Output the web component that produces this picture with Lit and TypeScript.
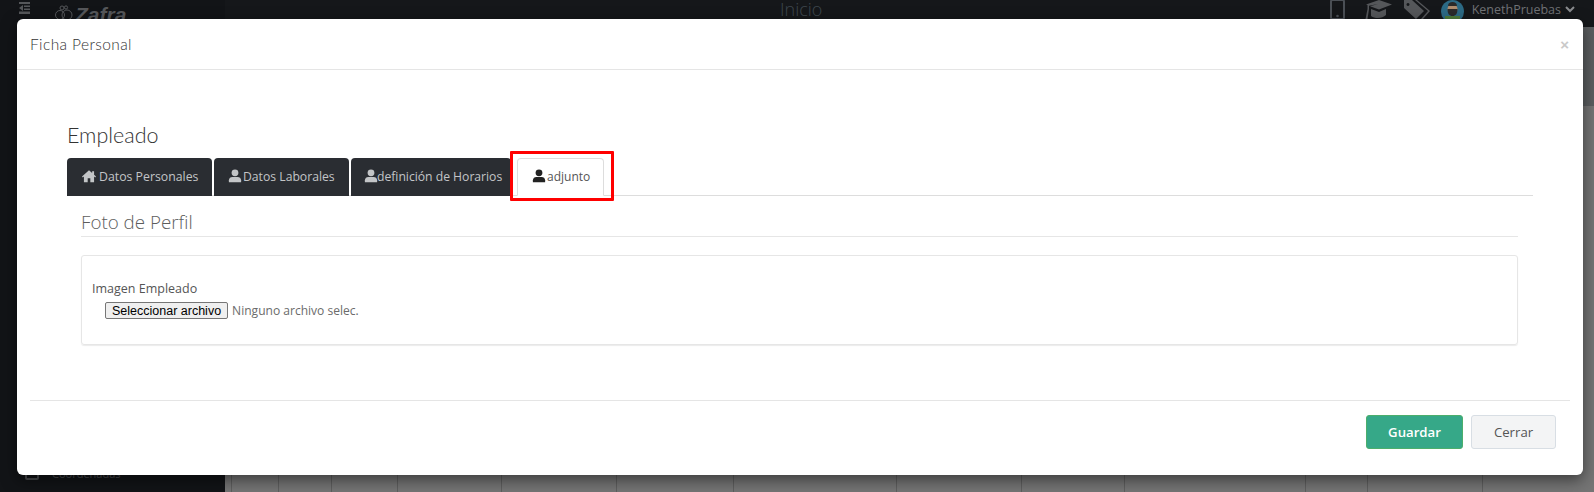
import { LitElement, html, css, svg } from 'lit';
import { customElement } from 'lit/decorators.js';

const homeIcon = svg`<path d="M8 1.5 0 8.6l.9 1L2.2 8.5V15h4.3v-4.3h3V15h4.3V8.5l1.3 1.1.9-1-2.2-2V2.5h-2.2v2.1z"/>`;
const userIcon = svg`<circle cx="8" cy="4.4" r="3.9"/><path d="M1 15v-2.2C1 10.4 3 9 5 9h6c2 0 4 1.4 4 3.8V15z"/>`;

const tabs = [
  { label: 'Datos Personales', icon: homeIcon, cls: 'w1' },
  { label: 'Datos Laborales', icon: userIcon, cls: 'w2' },
  { label: 'definición de Horarios', icon: userIcon, cls: 'w3' },
];

// widths taken from the table that shows under the modal
const tableCols = [47, 53, 66, 104, 115, 117, 163, 125, 103, 181, 62, 115, 112];

@customElement('app-root')
export class AppRoot extends LitElement {
  static styles = css`
    :host {
      display: block;
      position: relative;
      width: 1594px;
      height: 492px;
      overflow: hidden;
      font-family: 'Open Sans', sans-serif;
      background: #15171a;
    }
    /* page behind the modal */
    .page {
      display: flex;
      height: 100%;
    }
    .sidebar {
      width: 225px;
      flex: none;
      display: flex;
      flex-direction: column;
      justify-content: space-between;
      background: #121417;
      color: #55575a;
    }
    .brand {
      display: flex;
      align-items: flex-start;
      height: 27px;
      padding: 2px 0 0 19px;
      box-sizing: border-box;
      font-family: 'Liberation Sans', sans-serif;
      font-style: italic;
      font-weight: 700;
      font-size: 21px;
      line-height: 25px;
    }
    .brand .menu {
      margin-right: 24px;
    }
    .brand .logo {
      margin: 3px 2px 0 0;
    }
    .side-item {
      display: flex;
      align-items: center;
      gap: 13px;
      height: 18px;
      padding-left: 25px;
      margin-bottom: 10px;
      font-size: 11px;
      color: #4a4c4f;
    }
    .side-item i {
      width: 10px;
      height: 10px;
      border: 2px solid #4a4c4f;
      border-radius: 2px;
    }
    .main {
      flex: 1;
      min-width: 0;
      display: flex;
      flex-direction: column;
    }
    .topbar {
      height: 27px;
      flex: none;
      background: #15171a;
      display: flex;
      align-items: flex-start;
      color: #55575a;
      padding-right: 19px;
    }
    .topbar .title {
      font-size: 18px;
      line-height: 19px;
      font-weight: 300;
      color: #3f474e;
      margin-left: 555px;
    }
    .topbar .tools {
      margin-left: auto;
      display: flex;
      align-items: center;
      height: 19px;
      font-size: 12.5px;
      color: #707275;
    }
    .topbar svg {
      display: block;
      flex: none;
    }
    .phone {
      margin-right: 19px;
    }
    .cap {
      margin-right: 11px;
    }
    .tag {
      margin-right: 10px;
    }
    .avatar {
      margin-right: 8px;
    }
    .chevron {
      margin-left: 4px;
    }
    .strip {
      height: 79px;
      flex: none;
      background: linear-gradient(90deg, #6c6c6c, #5b5e60);
    }
    .content {
      flex: 1;
      background: #757575;
      display: flex;
      align-items: flex-end;
      padding-left: 6px;
    }
    .columns {
      display: flex;
      height: 30px;
      border-left: 1px solid #5f5f5f;
    }
    .columns span {
      box-sizing: border-box;
      border-right: 1px solid #5f5f5f;
    }
    /* modal */
    .modal {
      position: absolute;
      left: 17px;
      top: 19px;
      width: 1566px;
      height: 456px;
      box-sizing: border-box;
      background: #fff;
      border-radius: 6px;
      box-shadow: 0 5px 15px rgba(0, 0, 0, 0.5);
      display: flex;
      flex-direction: column;
      color: #555;
    }
    .modal-head {
      height: 51px;
      flex: none;
      box-sizing: border-box;
      border-bottom: 1px solid #e5e5e5;
      display: flex;
      align-items: center;
      justify-content: space-between;
      padding: 0 13px;
    }
    .modal-head h4 {
      margin: 0;
      font-family: 'Lato', sans-serif;
      font-size: 15.5px;
      font-weight: 300;
      letter-spacing: 0.4px;
      color: #333;
    }
    .close {
      font-family: 'Liberation Sans', sans-serif;
      font-size: 15px;
      font-weight: 700;
      color: #c9c9c9;
      padding-right: 1px;
    }
    .modal-body {
      flex: 1;
      padding: 51px 50px 0 50px;
    }
    h3 {
      margin: 0;
      font-family: 'Lato', sans-serif;
      font-size: 21.5px;
      line-height: 28px;
      font-weight: 300;
      color: #333;
    }
    .tabs {
      display: flex;
      height: 37px;
      margin-top: 9px;
      border-bottom: 1px solid #ddd;
    }
    .tab {
      display: flex;
      align-items: center;
      box-sizing: border-box;
      height: 38px;
      padding: 0 0 2px 14px;
      margin-right: 2px;
      background: #2a2d32;
      color: #c3c5c7;
      border-radius: 4px 4px 0 0;
      font-size: 12.2px;
      white-space: nowrap;
    }
    .tab svg {
      width: 14px;
      height: 14px;
      fill: currentColor;
      flex: none;
    }
    .tab.w1 {
      width: 145px;
      padding-left: 15px;
      gap: 3px;
      font-size: 12.3px;
    }
    .tab.w2 {
      width: 135px;
      gap: 1px;
    }
    .tab.w3 {
      width: 160px;
      padding-left: 13px;
      gap: 0;
      letter-spacing: -0.02px;
    }
    .tab.w3 svg {
      margin-right: -1px;
    }
    .tab.active {
      width: 87px;
      margin-left: 4px;
      background: #fff;
      color: #555;
      border: 1px solid #ddd;
      border-bottom-color: #fff;
      gap: 1px;
      font-size: 12px;
    }
    .tab.active svg {
      fill: #222;
    }
    .pane {
      padding: 0 15px 0 14px;
    }
    .pane h2 {
      margin: 0;
      height: 41px;
      box-sizing: border-box;
      padding-top: 14px;
      font-size: 18.8px;
      line-height: 24px;
      font-weight: 300;
      color: #5d5d5d;
      border-bottom: 1px solid #e6e6e6;
    }
    .card {
      margin-top: 18px;
      height: 90px;
      box-sizing: border-box;
      border: 1px solid #e6e6e6;
      border-radius: 3px;
      box-shadow: 0 1px 1px rgba(0, 0, 0, 0.08);
      padding: 25px 10px 0;
      font-size: 12.5px;
      color: #555;
    }
    .card label {
      display: block;
      line-height: 16px;
    }
    .file {
      display: flex;
      align-items: center;
      gap: 4px;
      margin: 5px 0 0 13px;
      font-size: 12.05px;
      color: #6b6b6b;
    }
    .file button {
      height: 17px;
      box-sizing: border-box;
      padding: 0 6px;
      font-family: 'Liberation Sans', sans-serif;
      font-size: 12.5px;
      color: #000;
      background: #efefef;
      border: 1px solid #767676;
      border-radius: 2px;
    }
    .modal-foot {
      margin: 0 13px;
      height: 75px;
      flex: none;
      box-sizing: border-box;
      border-top: 1px solid #e5e5e5;
      display: flex;
      justify-content: flex-end;
      gap: 8px;
      padding: 14px 14px 0 0;
    }
    .btn {
      height: 34px;
      box-sizing: border-box;
      border-radius: 3px;
      font-family: 'Open Sans', sans-serif;
      font-size: 13.2px;
    }
    .btn.save {
      width: 97px;
      background: #36a888;
      border: 1px solid #4cae6c;
      color: #fff;
      font-weight: 600;
    }
    .btn.cancel {
      width: 85px;
      background: #f3f4f5;
      border: 1px solid #d8dee4;
      color: #555;
    }
    /* annotation drawn over the active tab */
    .mark {
      position: absolute;
      left: 510px;
      top: 151px;
      width: 104px;
      height: 50px;
      box-sizing: border-box;
      border: 3px solid #f00;
      border-radius: 1px;
    }
  `;

  render() {
    return html`
      <div class="page">
        <div class="sidebar">
          <div class="brand">
            <svg class="menu" width="12" height="12" viewBox="0 0 12 12" fill="currentColor"><path d="M0 0h11v2H0zM5 3.5h6v1.5H5zM5 6.5h6V8H5zM0 9.5h11V12H0zM4 3 0 6l4 3z"/></svg>
            <svg class="logo" width="18" height="17" viewBox="0 0 18 17" fill="none" stroke="currentColor" stroke-width="1"><circle cx="5" cy="10" r="4.5"/><circle cx="12" cy="10" r="5"/><circle cx="7" cy="3" r="2"/><circle cx="11" cy="2.5" r="1.6"/></svg>
            <span>Zafra</span>
          </div>
          <div class="side-item"><i></i><span>Coordenadas</span></div>
        </div>
        <div class="main">
          <div class="topbar">
            <span class="title">Inicio</span>
            <div class="tools">
              <svg class="phone" width="15" height="19" viewBox="0 0 15 19" fill="none"><rect x="1" y="0" width="13" height="19" rx="1.5" stroke="#4a4f55" stroke-width="2"/><circle cx="7.5" cy="16" r="1.3" fill="#4a4f55"/></svg>
              <svg class="cap" width="28" height="19" viewBox="0 0 28 19" fill="#55575a"><path d="M15 0 28 4.5 15 9.5 6 6.2 14 4 5 5.8V9L3.5 19H1.5L3.5 9V5L2 4.5zM7 9l8 3 7-3v6c-2 2-5 3-8 3-3 0-5-.5-7-2z"/></svg>
              <svg class="tag" width="28" height="19" viewBox="0 0 28 19" fill="#55575a"><path d="M1 0h8l12 11-8 8L1 8zM5 3a1.5 1.5 0 1 0 .01 0zM12 0h2l13 11-7 8h-2l7-8z"/></svg>
              <svg class="avatar" width="23" height="19" viewBox="0 0 23 19"><clipPath id="av"><circle cx="11.5" cy="11.5" r="11.5"/></clipPath><g clip-path="url(#av)"><rect width="23" height="23" fill="#2c6a85"/><rect x="4" y="16" width="15" height="7" fill="#4d7a3a"/><circle cx="11.5" cy="9" r="5" fill="#b08d6e"/><path d="M6.5 9h10c0 5-2 7-5 7s-5-2-5-7zM7 6c0-3 2-4 4.5-4S16 3 16 6z" fill="#2a2a2a"/></g></svg>
              <span>KenethPruebas</span>
              <svg class="chevron" width="10" height="7" viewBox="0 0 10 7" fill="none" stroke="#8a8c8f" stroke-width="2"><path d="M1 1l4 4 4-4"/></svg>
            </div>
          </div>
          <div class="strip"></div>
          <div class="content">
            <div class="columns">
              ${tableCols.map((w) => html`<span style="width:${w}px"></span>`)}
            </div>
          </div>
        </div>
      </div>

      <div class="modal">
        <div class="modal-head">
          <h4>Ficha Personal</h4>
          <span class="close">×</span>
        </div>
        <div class="modal-body">
          <h3>Empleado</h3>
          <div class="tabs">
            ${tabs.map(
              (t) => html`<div class="tab ${t.cls}"><svg viewBox="0 0 16 16">${t.icon}</svg>${t.label}</div>`
            )}
            <div class="tab active"><svg viewBox="0 0 16 16">${userIcon}</svg>adjunto</div>
          </div>
          <div class="pane">
            <h2>Foto de Perfil</h2>
            <div class="card">
              <label>Imagen Empleado</label>
              <div class="file">
                <button>Seleccionar archivo</button>
                <span>Ninguno archivo selec.</span>
              </div>
            </div>
          </div>
        </div>
        <div class="modal-foot">
          <button class="btn save">Guardar</button>
          <button class="btn cancel">Cerrar</button>
        </div>
      </div>

      <div class="mark"></div>
    `;
  }
}
